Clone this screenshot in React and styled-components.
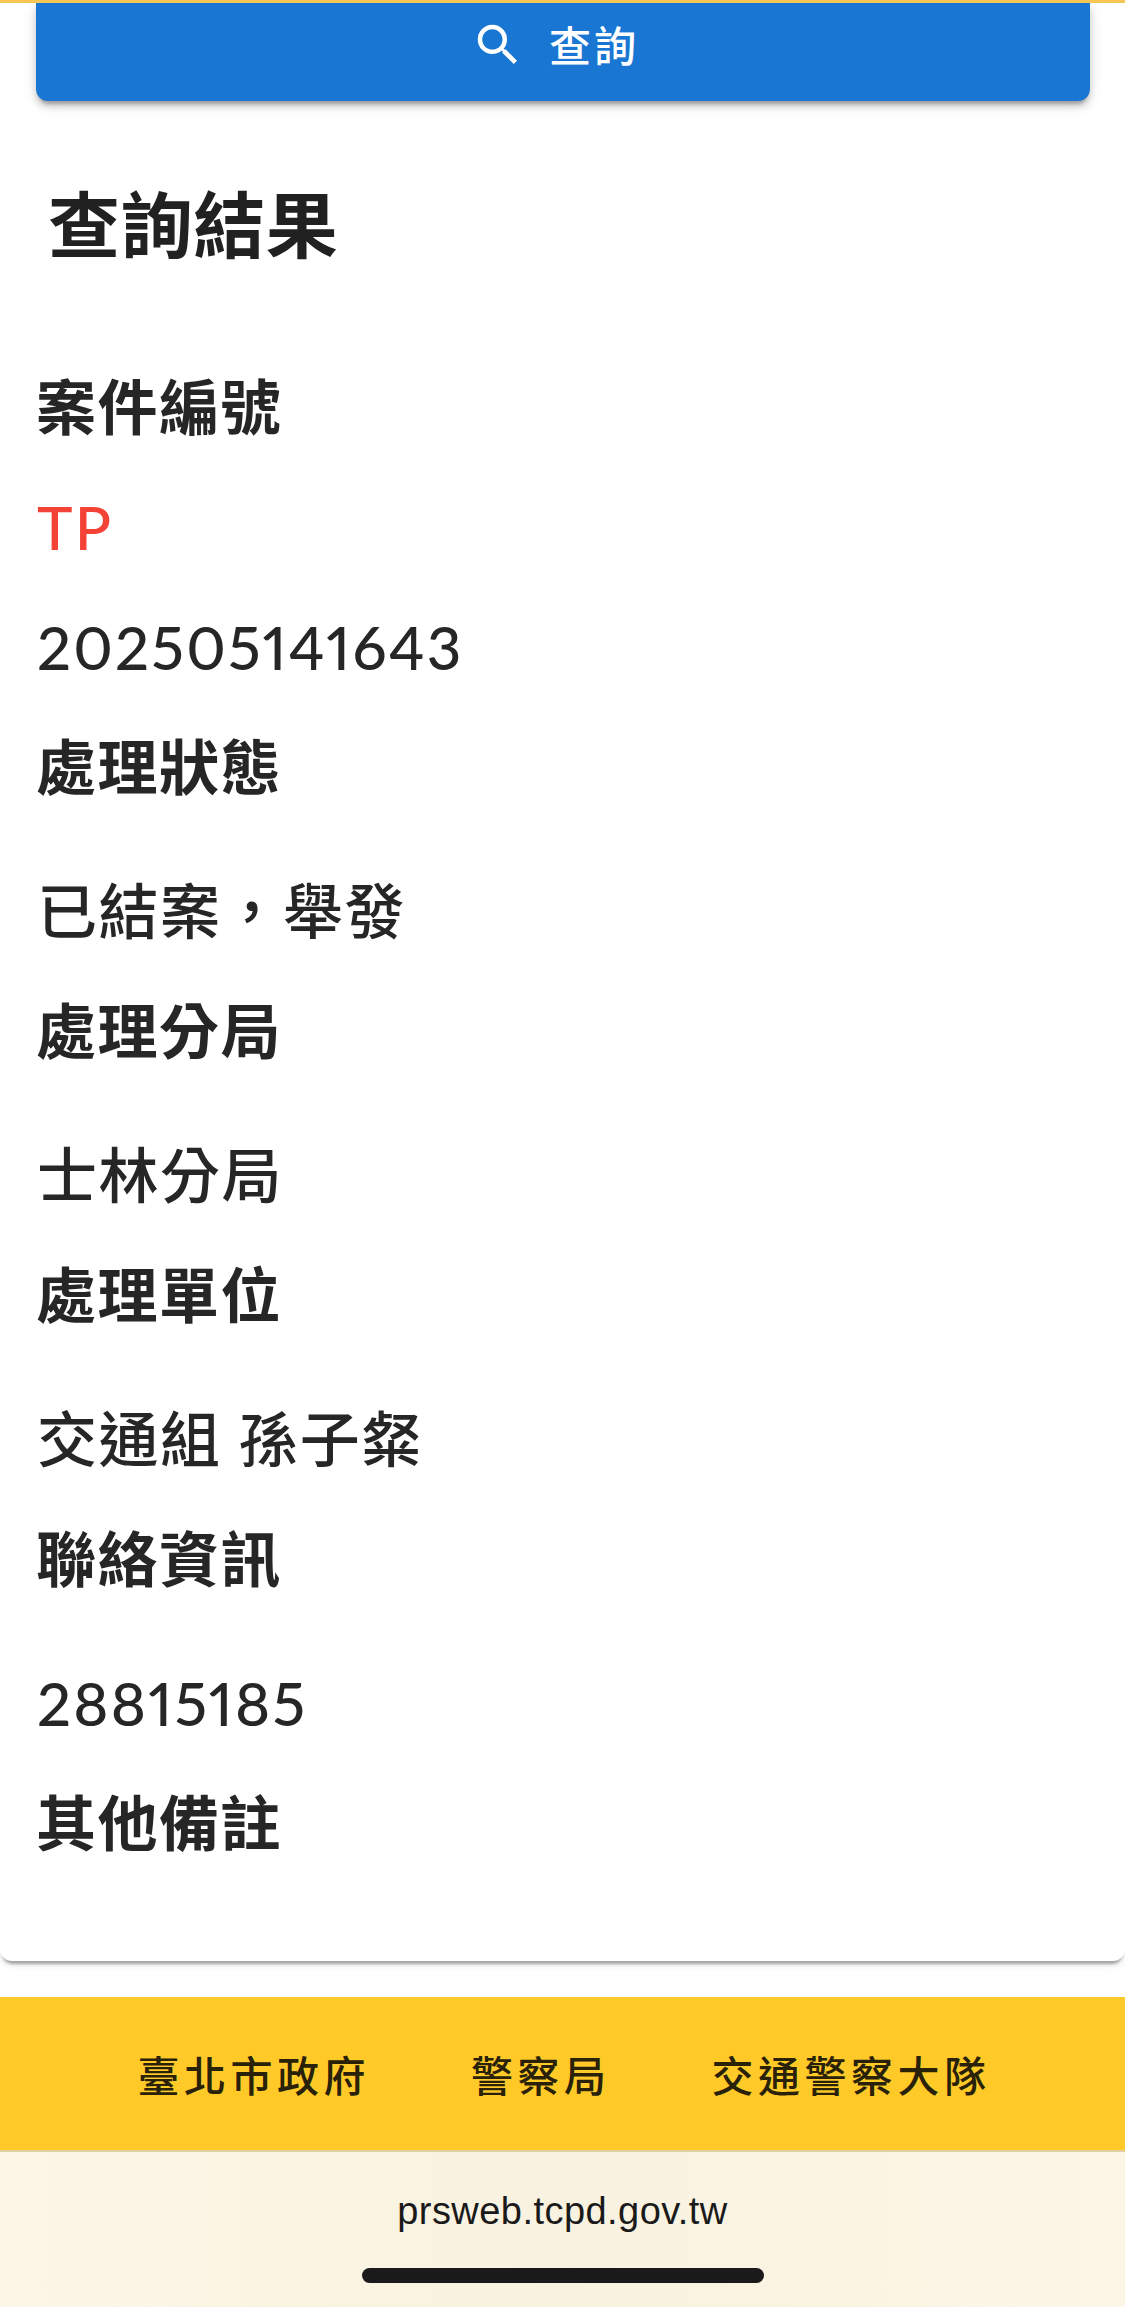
import styled, { createGlobalStyle } from "styled-components";
import { MdSearch } from "react-icons/md";

const CJK = `"Noto Sans CJK TC", "Noto Sans CJK SC", sans-serif`;

const GlobalStyle = createGlobalStyle`
  html, body {
    margin: 0;
    padding: 0;
    background: #fff;
  }
  body {
    font-family: Lato, ${CJK};
    color: #212121;
  }
`;

const Page = styled.div`
  width: 1125px;
  height: 2307px;
  overflow: hidden;
  display: flex;
  flex-direction: column;
  border-top: 3px solid #f6c655;
  box-sizing: border-box;
`;

const SearchButton = styled.button`
  flex: none;
  margin: 0 35px 0 36px;
  height: 98px;
  border: none;
  border-radius: 0 0 12px 12px;
  background: #1976d2;
  color: #fff;
  display: flex;
  align-items: center;
  justify-content: center;
  gap: 24px;
  font-family: ${CJK};
  font-size: 42px;
  font-weight: 500;
  letter-spacing: 3px;
  padding: 0 16px 14px 0;
  box-shadow: 0 6px 3px -3px rgba(0, 0, 0, 0.2), 0 6px 6px 0 rgba(0, 0, 0, 0.14), 0 3px 15px 0 rgba(0, 0, 0, 0.12);
`;

const ButtonLabel = styled.span`
  margin-bottom: 4px;
`;

const ResultCard = styled.section`
  flex: none;
  height: 1860px;
  box-sizing: border-box;
  padding: 0 37px;
  border-radius: 0 0 12px 12px;
  clip-path: inset(0 -20px -30px -20px);
  box-shadow: 0 6px 3px -3px rgba(0, 0, 0, 0.3), 0 3px 9px 0 rgba(0, 0, 0, 0.12);
`;

const Title = styled.h2`
  margin: 0 0 0 11px;
  padding-top: 75px;
  height: 127px;
  line-height: 90px;
  font-family: ${CJK};
  font-size: 72px;
  font-weight: 700;
  letter-spacing: 0.6px;
  color: #212121;
`;

const FieldList = styled.div`
  margin-top: 41px;
  display: flex;
  flex-direction: column;
`;

const Label = styled.div`
  height: 120px;
  line-height: 120px;
  margin-left: -1px;
  font-family: ${CJK};
  font-size: 60px;
  font-weight: 700;
  letter-spacing: 1.5px;
  color: #262626;
`;

const Value = styled.div`
  height: 120px;
  line-height: 126px;
  margin-top: ${({ $spaced }) => ($spaced ? "24px" : "0")};
  font-size: 60px;
  font-weight: 500;
  font-variant-numeric: lining-nums proportional-nums;
  letter-spacing: ${({ $latin }) => ($latin ? "2.2px" : "1.5px")};
  color: ${({ $accent }) => ($accent ? "#f44336" : "#262626")};
`;

const OrgBar = styled.footer`
  flex: none;
  margin-top: 36px;
  height: 153px;
  background: #ffca28;
  display: flex;
  align-items: center;
  justify-content: center;
  gap: 101px;
  padding-left: 3px;
  font-family: ${CJK};
  font-size: 42px;
  font-weight: 500;
  letter-spacing: 4.5px;
  color: #2a2208;
`;

const BrowserBar = styled.div`
  flex: 1;
  background: linear-gradient(90deg, #fcf6e6, #f9f2e0 50%, #fcf6e6);
  border-top: 2px solid #e0cf9f;
  display: flex;
  flex-direction: column;
  align-items: center;
`;

const Url = styled.div`
  margin-top: 37px;
  font-family: "Liberation Sans", Arial, sans-serif;
  font-size: 38px;
  line-height: 44px;
  letter-spacing: 0.45px;
  color: #1a1a1a;
`;

const HomeIndicator = styled.div`
  margin-top: 35px;
  width: 402px;
  height: 15px;
  border-radius: 8px;
  background: #1a1a1a;
`;

const fields = [
  { label: "案件編號", values: [{ text: "TP", accent: true, latin: true }, { text: "202505141643", latin: true }] },
  { label: "處理狀態", values: [{ text: "已結案，舉發", spaced: true }] },
  { label: "處理分局", values: [{ text: "士林分局", spaced: true }] },
  { label: "處理單位", values: [{ text: "交通組 孫子粲", spaced: true }] },
  { label: "聯絡資訊", values: [{ text: "28815185", spaced: true, latin: true }] },
  { label: "其他備註", values: [] },
];

export default function App() {
  return (
    <>
      <GlobalStyle />
      <Page>
        <SearchButton>
          <MdSearch size={54} />
          <ButtonLabel>查詢</ButtonLabel>
        </SearchButton>
        <ResultCard>
          <Title>查詢結果</Title>
          <FieldList>
            {fields.map((field) => (
              <div key={field.label}>
                <Label>{field.label}</Label>
                {field.values.map((value) => (
                  <Value key={value.text} $accent={value.accent} $spaced={value.spaced} $latin={value.latin}>
                    {value.text}
                  </Value>
                ))}
              </div>
            ))}
          </FieldList>
        </ResultCard>
        <OrgBar>
          <span>臺北市政府</span>
          <span>警察局</span>
          <span>交通警察大隊</span>
        </OrgBar>
        <BrowserBar>
          <Url>prsweb.tcpd.gov.tw</Url>
          <HomeIndicator />
        </BrowserBar>
      </Page>
    </>
  );
}
